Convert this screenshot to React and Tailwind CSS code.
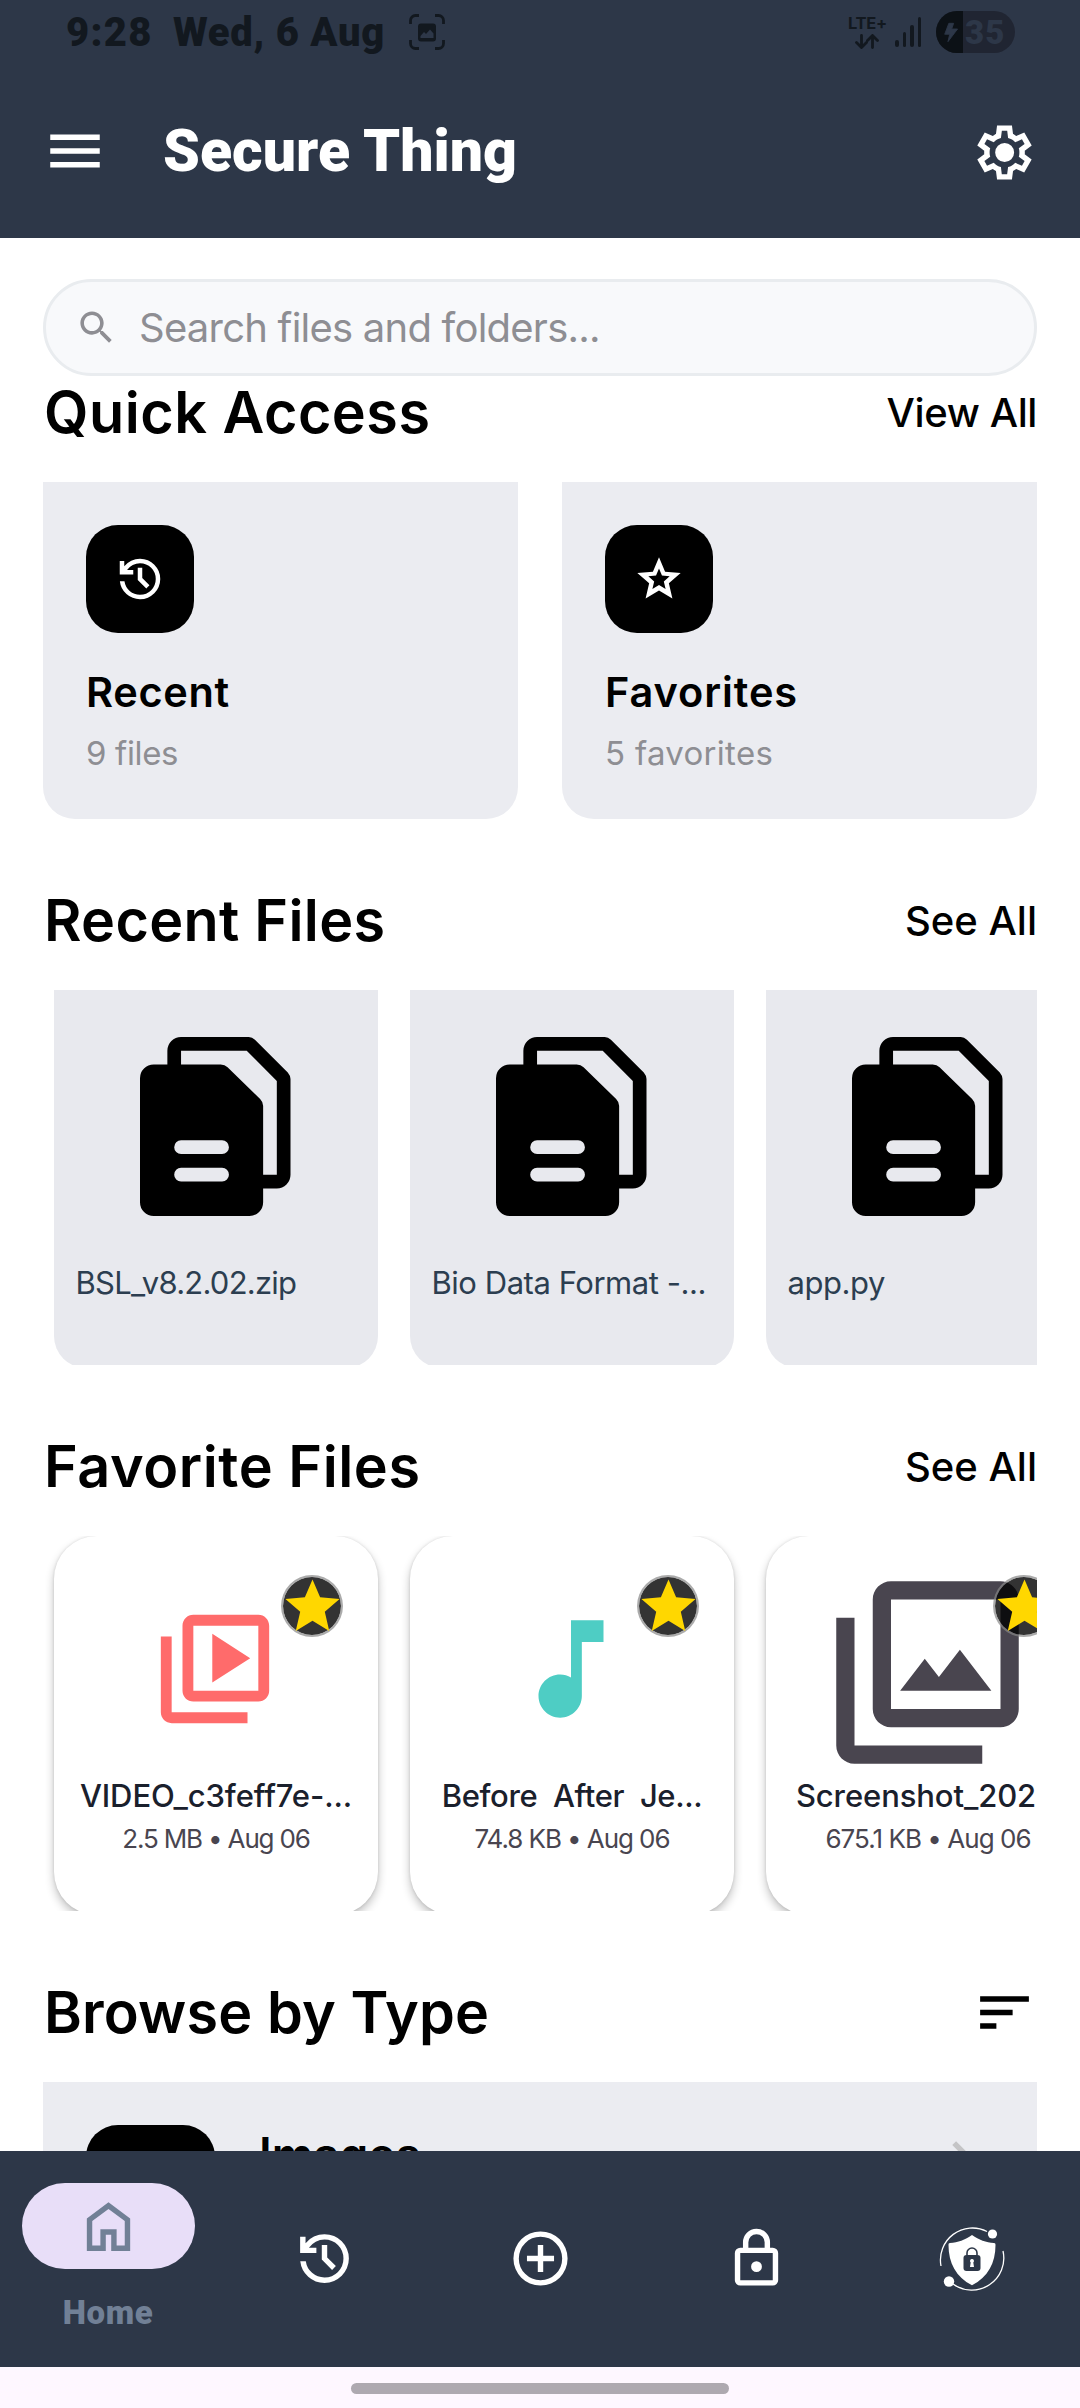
import React from 'react';

/* ---------- icons ---------- */

function Symbol({ d, className }) {
  return (
    <svg viewBox="0 -960 960 960" fill="currentColor" className={className}>
      <path d={d} />
    </svg>
  );
}

const SYMBOLS = {
  history:
    'M480-120q-138 0-240.5-91.5T122-440h82q14 104 92.5 172T480-200q117 0 198.5-81.5T760-480q0-117-81.5-198.5T480-760q-69 0-129 32t-101 88h110v80H120v-240h80v94q51-64 124.5-99T480-840q75 0 140.5 28.5t114 77q48.5 48.5 77 114T840-480q0 75-28.5 140.5t-77 114q-48.5 48.5-114 77T480-120Zm112-192L440-464v-216h80v184l128 128-56 56Z',
  settings:
    'm370-80-16-128q-13-5-24.5-12T307-235l-119 50L78-375l103-78q-1-7-1-13.5v-27q0-6.5 1-13.5L78-585l110-190 119 50q11-8 23-15t24-12l16-128h220l16 128q13 5 24.5 12t22.5 15l119-50 110 190-103 78q1 7 1 13.5v27q0 6.5-2 13.5l103 78-110 190-118-50q-11 8-23 15t-24 12L590-80H370Zm70-80h79l14-106q31-8 57.5-23.5T639-327l99 41 39-68-86-65q5-14 7-29.5t2-31.5q0-16-2-31.5t-7-29.5l86-65-39-68-99 42q-22-23-48.5-38.5T533-694l-13-106h-79l-14 106q-31 8-57.5 23.5T321-633l-99-41-39 68 86 64q-5 15-7 30t-2 32q0 16 2 31t7 30l-86 65 39 68 99-42q22 23 48.5 38.5T427-266l13 106Zm42-180q58 0 99-41t41-99q0-58-41-99t-99-41q-59 0-99.5 41T342-480q0 58 40.5 99t99.5 41Z',
  home: 'M240-200h120v-240h240v240h120v-360L480-740 240-560v360Zm-80 80v-480l320-240 320 240v480H520v-240h-80v240H160Z',
  add: 'M440-280h80v-160h160v-80H520v-160h-80v160H280v80h160v160Zm40 200q-83 0-156-31.5T197-197q-54-54-85.5-127T80-480q0-83 31.5-156T197-763q54-54 127-85.5T480-880q83 0 156 31.5T763-763q54 54 85.5 127T880-480q0 83-31.5 156T763-197q-54 54-127 85.5T480-80Zm0-80q134 0 227-93t93-227q0-134-93-227t-227-93q-134 0-227 93t-93 227q0 134 93 227t227 93Z',
  lock: 'M240-80q-33 0-56.5-23.5T160-160v-400q0-33 23.5-56.5T240-640h40v-80q0-83 58.5-141.5T480-920q83 0 141.5 58.5T680-720v80h40q33 0 56.5 23.5T800-560v400q0 33-23.5 56.5T720-80H240Zm0-80h480v-400H240v400Zm240-120q33 0 56.5-23.5T560-360q0-33-23.5-56.5T480-440q-33 0-56.5 23.5T400-360q0 33 23.5 56.5T480-280ZM360-640h240v-80q0-50-35-85t-85-35q-50 0-85 35t-35 85v80Z',
};

function Icon24({ d, className }) {
  return (
    <svg viewBox="0 0 24 24" fill="currentColor" className={className}>
      <path d={d} />
    </svg>
  );
}

const ICONS = {
  menu: 'M3 18h18v-2H3v2zm0-5h18v-2H3v2zm0-7v2h18V6H3z',
  search:
    'M15.5 14h-.79l-.28-.27C15.41 12.59 16 11.11 16 9.5 16 5.91 13.09 3 9.5 3S3 5.91 3 9.5 5.91 16 9.5 16c1.61 0 3.09-.59 4.23-1.57l.27.28v.79l5 4.99L20.49 19l-4.99-5zm-6 0C7.01 14 5 11.99 5 9.5S7.01 5 9.5 5 14 7.01 14 9.5 11.99 14 9.5 14z',
  starOutline:
    'M22 9.24l-7.19-.62L12 2 9.19 8.63 2 9.24l5.46 4.73L5.82 21 12 17.27 18.18 21l-1.63-7.03L22 9.24zM12 14.75l-3.05 1.85.82-3.5-2.7-2.35 3.56-.32L12 7.15l1.37 3.28 3.56.32-2.7 2.35.82 3.5L12 14.75z',
  star: 'M12 17.27L18.18 21l-1.64-7.03L22 9.24l-7.19-.61L12 2 9.19 8.63 2 9.24l5.46 4.73L5.82 21z',
  video:
    'M4 6H2v14c0 1.1.9 2 2 2h14v-2H4V6zm16-4H8c-1.1 0-2 .9-2 2v12c0 1.1.9 2 2 2h12c1.1 0 2-.9 2-2V4c0-1.1-.9-2-2-2zm0 14H8V4h12v12zM11.5 5.5v9l7-4.5z',
  note: 'M12 3v10.55c-.59-.34-1.27-.55-2-.55-2.21 0-4 1.79-4 4s1.79 4 4 4 4-1.79 4-4V7h4V3h-6z',
  photos:
    'M4 6H2v14c0 1.1.9 2 2 2h14v-2H4V6zm16-4H8c-1.1 0-2 .9-2 2v12c0 1.1.9 2 2 2h12c1.1 0 2-.9 2-2V4c0-1.1-.9-2-2-2zm0 14H8V4h12v12zM9 14h10l-3.45-4.5-2.3 3-1.55-2z',
  sort: 'M3 18h6v-2H3v2zM3 6v2h18V6H3zm0 7h12v-2H3v2z',
  chevron: 'M10 6L8.59 7.41 13.17 12l-4.58 4.59L10 18l6-6z',
};

function FilesIcon({ className }) {
  return (
    <svg viewBox="0 0 11 13" preserveAspectRatio="none" fill="currentColor" className={className}>
      <path
        fillRule="evenodd"
        d="M1 2H5.9Q6.2 2 6.4 2.2L8.78 4.5Q9 4.72 9 5V12a1 1 0 0 1-1 1H1a1 1 0 0 1-1-1V3a1 1 0 0 1 1-1zM3 7.5a.5.5 0 0 0 0 1H6a.5.5 0 0 0 0-1zM3 9.5a.5.5 0 0 0 0 1H6a.5.5 0 0 0 0-1z"
      />
      <path d="M2 2.1V1a1 1 0 0 1 1-1H7.95Q8.2 0 8.4.2L10.8 2.57Q11 2.8 11 3.05V10a1 1 0 0 1-1 1H8.9V10H10V3.2L7.8 1H3V2.1z" />
    </svg>
  );
}

function ShieldOrbitIcon({ className }) {
  return (
    <svg viewBox="0 0 66 68" fill="none" className={className}>
      <path d="M2 41A32 32 0 0 1 48 6.5" stroke="#fff" strokeWidth="1.3" />
      <path d="M64 26A32 32 0 0 1 14 59" stroke="#fff" strokeWidth="1.3" />
      <circle cx="53.5" cy="9" r="4.6" fill="#fff" />
      <circle cx="10" cy="56.5" r="5.2" fill="#fff" />
      <path d="M33 10C26 15 19 17.500 11 18C9.800 18.200 9.500 18.800 9.500 20C9.500 38 17 52 33 60.300C49 52 56.500 38 56.500 20C56.500 18.800 56.200 18.200 55 18C47 17.500 40 15 33 10z" fill="#fff" />
      <path d="M28 30v-2a5 5 0 0 1 10 0v2" stroke="#2d3748" strokeWidth="1.6" />
      <rect x="24.500" y="30" width="17" height="16" rx="3" fill="#2d3748" />
      <path d="M33 34a2 2 0 0 1 1.300 3.500L35 42h-4l.7-4.500A2 2 0 0 1 33 34z" fill="#fff" />
    </svg>
  );
}

function CaptureIcon({ className }) {
  return (
    <svg viewBox="0 0 36 36" fill="none" className={className}>
      <path d="M1.500 10V6.500a5 5 0 0 1 5-5H10M26 1.500h3.500a5 5 0 0 1 5 5V10M34.500 26v3.500a5 5 0 0 1-5 5H26M10 34.500H6.500a5 5 0 0 1-5-5V26" stroke="currentColor" strokeWidth="2.800" />
      <path fill="currentColor" fillRule="evenodd" d="M12 9.500h12a3 3 0 0 1 3 3v12a3 3 0 0 1-3 3H12a3 3 0 0 1-3-3v-12a3 3 0 0 1 3-3zM11.500 24h13v-4.500l-3.500-4-4 4.500-2-2-3.500 4z" />
    </svg>
  );
}

function BoltIcon({ className }) {
  return (
    <svg viewBox="0 0 16 22" fill="currentColor" className={className}>
      <path d="M5.500.5H11L8.800 7h6.700L4.500 21.500 6.500 13H.8z" stroke="currentColor" strokeLinejoin="round" />
    </svg>
  );
}

function DataArrows({ className }) {
  return (
    <svg viewBox="0 0 24 15" fill="none" stroke="currentColor" strokeWidth="2.800" strokeLinecap="round" className={className}>
      <path d="M6.500 1.500v11.500M1.500 8.500l5 5 5-5M17.500 13.500V2M12.500 6.500l5-5 5 5" />
    </svg>
  );
}

/* ---------- header ---------- */

function StatusBar() {
  return (
    <div className="flex h-[64px] items-center pl-[66px] pr-[65px] font-['Roboto',sans-serif] text-[#12181f]">
      <span className="w-[107px] pt-[2px] text-[40px] font-black leading-[64px] tracking-[1.3px]">9:28</span>
      <span className="w-[236px] whitespace-nowrap pt-[2px] text-[40px] font-black leading-[64px] tracking-[0.7px]">Wed, 6 Aug</span>
      <CaptureIcon className="h-[36px] w-[36px]" />
      <div className="ml-auto flex items-center">
        <div className="flex w-[40px] flex-col items-center">
          <span className="font-['Inter',sans-serif] text-[16.500px] font-bold leading-[17px] tracking-[-0.3px]">LTE+</span>
          <DataArrows className="mt-[2px] h-[15px] w-[24px]" />
        </div>
        <div className="ml-[8px] flex h-[30px] items-end gap-[4px]">
          <i className="h-[7px] w-[3.400px] rounded-full bg-current" />
          <i className="h-[15px] w-[3.400px] rounded-full bg-current" />
          <i className="h-[22px] w-[3.400px] rounded-full bg-current" />
          <i className="h-[30px] w-[3.400px] rounded-full bg-current" />
        </div>
        <div className="ml-[15px] flex h-[42px] w-[79px] overflow-hidden rounded-full bg-[#202532]">
          <div className="flex w-[27px] items-center justify-center bg-[#0c1116] pl-[3px] text-[#2d3748]">
            <BoltIcon className="h-[21px] w-[14px]" />
          </div>
          <span className="pl-[2px] text-[33px] font-black leading-[43px] tracking-[1px] text-[#2d3748]">35</span>
        </div>
      </div>
    </div>
  );
}

function AppBar() {
  return (
    <div className="flex h-[174px] items-center pl-[42px] pr-[43px] text-white">
      <Icon24 d={ICONS.menu} className="h-[66px] w-[66px]" />
      <h1 className="ml-[55px] font-['Roboto',sans-serif] text-[59px] font-black leading-[70px]">Secure Thing</h1>
      <Symbol d={SYMBOLS.settings} className="ml-auto mt-[2px] h-[65px] w-[65px]" />
    </div>
  );
}

/* ---------- sections ---------- */

function SectionHeader({ title, track, children }) {
  return (
    <div className="flex h-[72px] items-center justify-between pl-[1px]">
      <h2 className={`text-[57.500px] font-semibold leading-[72px] text-black ${track}`}>{title}</h2>
      {children}
    </div>
  );
}

function TextLink({ children, track }) {
  return <span className={`pt-[2px] text-[40px] font-medium leading-[72px] text-black ${track}`}>{children}</span>;
}

function QuickCard({ icon, title, titleTrack, subtitle, subTrack }) {
  return (
    <div className="h-[337px] flex-1 rounded-b-[32px] bg-[#ebecf1] p-[43px]">
      <div className="flex h-[108px] w-[108px] items-center justify-center rounded-[32px] bg-black text-white">{icon}</div>
      <p className={`mt-[34px] text-[41.500px] font-semibold leading-[50px] text-black ${titleTrack}`}>{title}</p>
      <p className={`mt-[16px] text-[33px] leading-[40px] text-[#8e8e93] ${subTrack}`}>{subtitle}</p>
    </div>
  );
}

function RecentCard({ name, track }) {
  return (
    <div className="h-[378px] w-[324px] shrink-0 rounded-b-[32px] bg-[#e8e9ee] px-[21.500px] pt-[47px]">
      <FilesIcon className="ml-[64.500px] h-[179px] w-[150.500px] text-black" />
      <p className={`mt-[47px] whitespace-nowrap text-[31px] leading-[40px] text-[#2c3e50] ${track}`}>{name}</p>
    </div>
  );
}

function FavoriteCard({ icon, name, track, meta, metaTrack }) {
  return (
    <div className="relative h-[379px] w-[324px] shrink-0 rounded-[43px] bg-white pt-[27px] shadow-[0_5px_10px_rgba(0,0,0,0.24),0_0_3px_rgba(0,0,0,0.12)]">
      <div className="flex h-[216px] items-center justify-center">{icon}</div>
      <p className={`-mt-[4px] whitespace-pre text-center text-[31px] font-medium leading-[42px] text-[#1a202c] ${track}`}>{name}</p>
      <p className={`mt-[5px] whitespace-nowrap text-center text-[26px] leading-[34px] text-[#49454f] ${metaTrack}`}>{meta}</p>
      <div className="absolute left-[227px] top-[39px] flex h-[62px] w-[62px] items-center justify-center rounded-full border-2 border-[#888888]/70 bg-black/80 bg-clip-padding text-[#ffd700]">
        <Icon24 d={ICONS.star} className="h-[65px] w-[65px] shrink-0" />
      </div>
    </div>
  );
}

/* ---------- bottom navigation ---------- */

function BottomNav() {
  return (
    <nav className="grid h-[216px] shrink-0 grid-cols-5 bg-[#2d3748] text-white">
      <div className="flex flex-col items-center pt-[32px]">
        <div className="flex h-[86px] w-[173px] items-center justify-center rounded-full bg-[#e8def8] text-[#718096]">
          <Symbol d={SYMBOLS.home} className="h-[65px] w-[65px]" />
        </div>
        <span className="mt-[24px] font-['Roboto',sans-serif] text-[33px] font-black leading-[40px] tracking-[0.6px] text-[#718096]">Home</span>
      </div>
      <div className="flex items-center justify-center pb-[1px]"><Symbol d={SYMBOLS.history} className="h-[65px] w-[65px]" /></div>
      <div className="flex items-center justify-center pb-[1px]"><Symbol d={SYMBOLS.add} className="h-[65px] w-[65px]" /></div>
      <div className="flex items-center justify-center pb-[1px]"><Symbol d={SYMBOLS.lock} className="h-[65px] w-[65px]" /></div>
      <div className="flex items-center justify-center pb-[1px] pr-[1px]"><ShieldOrbitIcon className="h-[68px] w-[66px]" /></div>
    </nav>
  );
}

export default function App() {
  return (
    <div className="flex h-[2408px] w-[1080px] flex-col overflow-hidden bg-white font-['Inter',sans-serif]">
      <header className="h-[238px] shrink-0 bg-[#2d3748]">
        <StatusBar />
        <AppBar />
      </header>

      <main className="h-[1913px] shrink-0 overflow-hidden px-[43px] pt-[41px]">
        <div className="flex h-[97px] items-center rounded-full border-[3px] border-[#e9ecef] bg-[#f8f9fb] pl-[28.500px] text-[#8e8e93]">
          <Icon24 d={ICONS.search} className="h-[43px] w-[43px]" />
          <span className="ml-[21.500px] text-[40px] leading-[50px] tracking-[-0.77px]">Search files and folders...</span>
        </div>

        <SectionHeader title="Quick Access" track="tracking-[0.5px]">
          <TextLink track="tracking-[-0.4px]">View All</TextLink>
        </SectionHeader>
        <div className="mt-[34px] flex gap-[44px]">
          <QuickCard
            icon={<Symbol d={SYMBOLS.history} className="h-[54px] w-[54px]" />}
            title="Recent"
            titleTrack="tracking-[0.65px]"
            subtitle="9 files"
            subTrack="tracking-[-0.35px]"
          />
          <QuickCard
            icon={<Icon24 d={ICONS.starOutline} className="h-[52px] w-[52px]" />}
            title="Favorites"
            titleTrack="tracking-[0.9px]"
            subtitle="5 favorites"
            subTrack="tracking-[0.3px]"
          />
        </div>

        <div className="mt-[65px]">
          <SectionHeader title="Recent Files" track="tracking-[0.3px]">
            <TextLink track="tracking-normal">See All</TextLink>
          </SectionHeader>
        </div>
        <div className="mt-[34px] flex h-[375px] gap-[32px] overflow-hidden pl-[11px]">
          <RecentCard name="BSL_v8.2.02.zip" track="tracking-[-0.77px]" />
          <RecentCard name="Bio Data Format -..." track="tracking-[-0.46px]" />
          <RecentCard name="app.py" track="tracking-[-0.44px]" />
        </div>

        <div className="mt-[65px]">
          <SectionHeader title="Favorite Files" track="tracking-[0.57px]">
            <TextLink track="tracking-normal">See All</TextLink>
          </SectionHeader>
        </div>
        <div className="mt-[34px] flex h-[375px] gap-[32px] overflow-hidden pl-[11px]">
          <FavoriteCard
            icon={<Icon24 d={ICONS.video} className="mb-[4px] mr-[2px] h-[130px] w-[130px] text-[#ff6b6b]" />}
            name="VIDEO_c3feff7e-..."
            track="tracking-[-0.1px]"
            meta="2.5 MB • Aug 06"
            metaTrack="tracking-[-1.17px]"
          />
          <FavoriteCard
            icon={<Icon24 d={ICONS.note} className="mb-[4px] mr-[2px] h-[130px] w-[130px] text-[#4ecdc4]" />}
            name="Before  After  Je..."
            track="tracking-[-0.38px]"
            meta="74.8 KB • Aug 06"
            metaTrack="tracking-[-1.08px]"
          />
          <FavoriteCard
            icon={<Icon24 d={ICONS.photos} className="mr-[1px] mt-[2px] h-[219px] w-[219px] shrink-0 text-[#49454f]" />}
            name="Screenshot_202"
            track="pr-[24px] tracking-[-0.1px]"
            meta="675.1 KB • Aug 06"
            metaTrack="tracking-[-0.97px]"
          />
        </div>

        <div className="mt-[65px]">
          <SectionHeader title="Browse by Type" track="tracking-[0.15px]">
            <Icon24 d={ICONS.sort} className="h-[65px] w-[65px] text-black" />
          </SectionHeader>
        </div>
        <div className="mt-[34px] flex h-[215px] items-start bg-[#ebecf1] px-[43px] pt-[43px]">
          <div className="h-[129px] w-[129px] rounded-[32px] bg-black" />
          <p className="ml-[44px] mt-[1px] text-[46px] font-semibold leading-[56px] text-black">Images</p>
          <Icon24 d={ICONS.chevron} className="ml-auto h-[65px] w-[65px] text-[#c4c4c6]" />
        </div>
      </main>

      <BottomNav />
      <div className="flex flex-1 justify-center bg-[#fef7ff] pt-[16px]">
        <div className="h-[11px] w-[378px] rounded-full bg-[#aea9b0]" />
      </div>
    </div>
  );
}
